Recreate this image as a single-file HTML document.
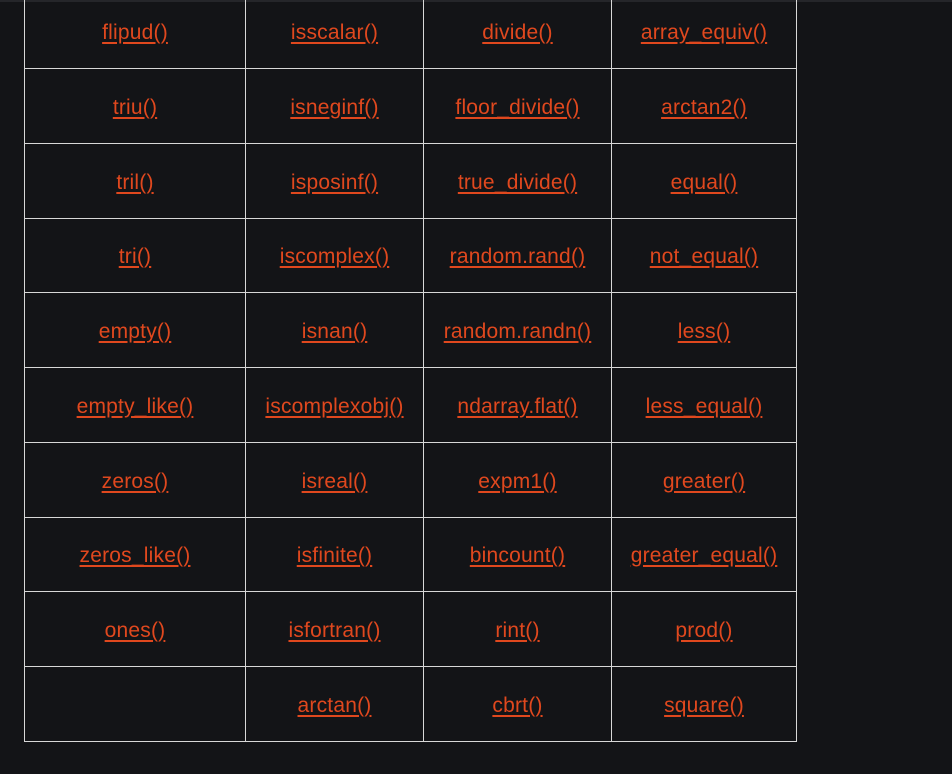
<!DOCTYPE html><html><head><style>
body{margin:0;background:#131417;width:952px;height:774px;overflow:hidden;position:relative;font-family:"Liberation Sans",sans-serif}
.top{position:absolute;left:0;top:0;width:952px;height:2px;background:#25262a}
.c{position:absolute;box-sizing:border-box;padding-top:3px;border-left:1px solid #d8d8d8;border-bottom:1px solid #d8d8d8;display:flex;align-items:center;justify-content:center;color:#e0481e;font-size:21px;text-decoration:underline;text-underline-offset:3px;letter-spacing:0.2px}
</style></head><body><div class="top"></div>
<div id="g"></div>
<script>
var d=[["flipud()","isscalar()","divide()","array_equiv()"],["triu()","isneginf()","floor_divide()","arctan2()"],["tril()","isposinf()","true_divide()","equal()"],["tri()","iscomplex()","random.rand()","not_equal()"],["empty()","isnan()","random.randn()","less()"],["empty_like()","iscomplexobj()","ndarray.flat()","less_equal()"],["zeros()","isreal()","expm1()","greater()"],["zeros_like()","isfinite()","bincount()","greater_equal()"],["ones()","isfortran()","rint()","prod()"],["","arctan()","cbrt()","square()"]];
var xs=[24,245,423,611,797],ys=[-7,68,143,218,292,367,442,517,591,666,741],h="";
for(var r=0;r<10;r++)for(var c=0;c<4;c++){var w=xs[c+1]-xs[c];h+='<div class="c" style="left:'+xs[c]+'px;top:'+(ys[r]+1)+'px;width:'+w+'px;height:'+(ys[r+1]-ys[r])+'px;'+(c==3?'border-right:1px solid #d8d8d8;':'')+'">'+d[r][c]+'</div>';}
document.getElementById('g').innerHTML=h;
</script></body></html>
